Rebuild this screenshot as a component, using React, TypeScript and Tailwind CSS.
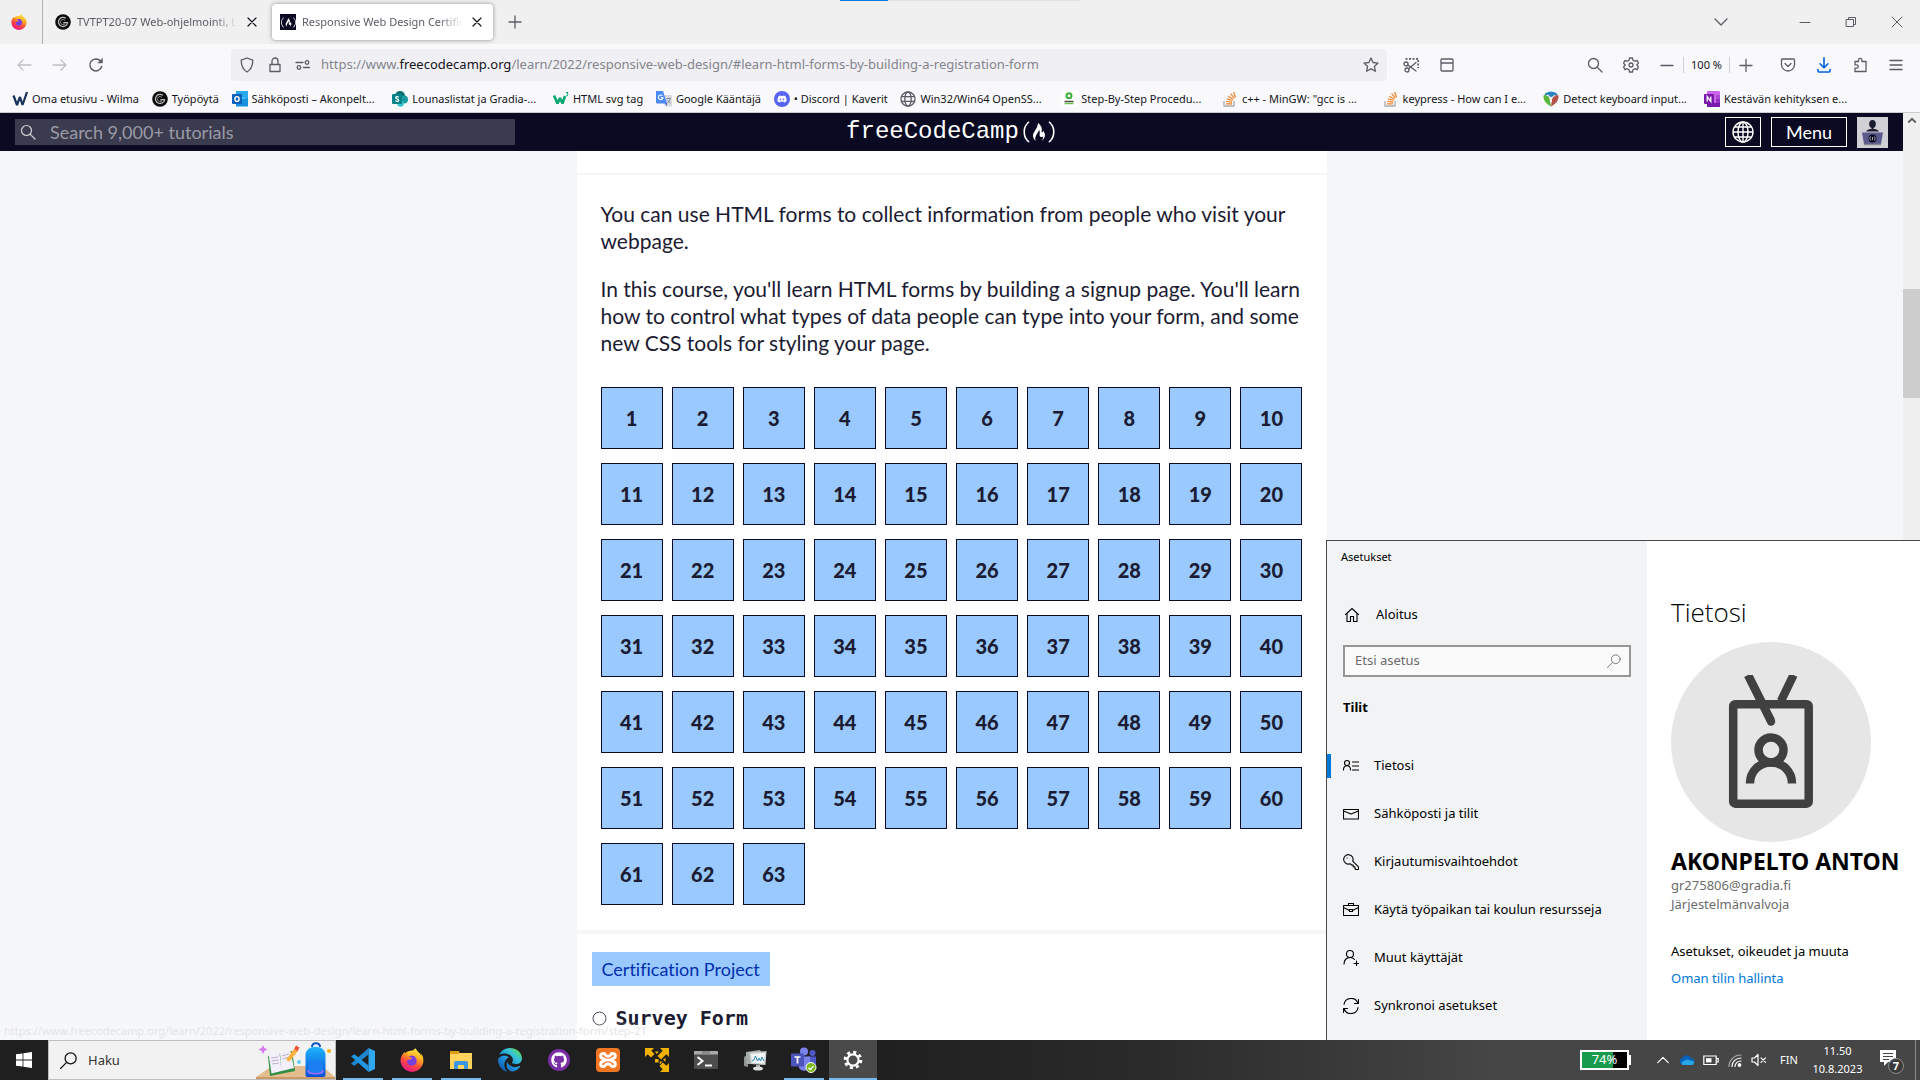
import type { ReactNode } from 'react';
import {
  FaDiscord,
  FaEdge,
  FaFirefoxBrowser,
  FaFreeCodeCamp,
  FaGithub,
} from 'react-icons/fa6';

const UI = "font-['Noto_Sans','Open_Sans',sans-serif]";

/* ---------- shared drawings ---------- */

function Stroke({ size = 16, width = 1.3, children }: { size?: number; width?: number; children: ReactNode }) {
  return (
    <svg
      width={size}
      height={size}
      viewBox="0 0 16 16"
      fill="none"
      stroke="currentColor"
      strokeWidth={width}
      strokeLinecap="round"
      strokeLinejoin="round"
      aria-hidden="true"
      className="shrink-0"
    >
      {children}
    </svg>
  );
}

function Gradients() {
  return (
    <svg width="0" height="0" className="absolute" aria-hidden="true">
      <defs>
        <linearGradient id="fox" x1="0.8" y1="0" x2="0.3" y2="1">
          <stop offset="0" stopColor="#fff44f" />
          <stop offset="0.35" stopColor="#ffb01f" />
          <stop offset="0.65" stopColor="#ff4a3d" />
          <stop offset="1" stopColor="#e6158a" />
        </linearGradient>
        <linearGradient id="edge" x1="0.1" y1="1" x2="0.9" y2="0.1">
          <stop offset="0" stopColor="#0f4fa8" />
          <stop offset="0.45" stopColor="#1f93dc" />
          <stop offset="0.75" stopColor="#36c2d8" />
          <stop offset="1" stopColor="#5fd85a" />
        </linearGradient>
        <linearGradient id="bag" x1="0" y1="0" x2="0" y2="1">
          <stop offset="0" stopColor="#1fb6ff" />
          <stop offset="1" stopColor="#0a4fd6" />
        </linearGradient>
      </defs>
    </svg>
  );
}

function Firefox({ size }: { size: number }) {
  return (
    <span className="relative flex items-center justify-center">
      <svg width={size} height={size} viewBox="0 0 24 24" className="absolute" aria-hidden="true">
        <circle cx="12" cy="13" r="10.5" fill="url(#fox)" />
        <circle cx="12" cy="13" r="5.5" fill="#7a3fe0" />
      </svg>
      <FaFirefoxBrowser size={size} className="relative fill-[url(#fox)]" />
    </span>
  );
}

function Gradia() {
  return (
    <svg width="16" height="16" viewBox="0 0 16 16" className="shrink-0" fill="none" aria-hidden="true">
      <circle cx="8" cy="8" r="7.8" fill="#0a0a0a" />
      <path d="M11 4.400A4.600 4.600 0 1 0 12.600 8.600H8.400" stroke="#bdbdbd" strokeWidth="1.200" />
      <path d="M10 6.400A2.600 2.600 0 1 0 9.600 10.100M9 8.600v3" stroke="#8b8b8b" strokeWidth="1" />
    </svg>
  );
}

function Close({ size = 16 }: { size?: number }) {
  return (
    <Stroke size={size} width={1.2}>
      <path d="M4 4l8 8M12 4l-8 8" />
    </Stroke>
  );
}

/* ---------- tab strip ---------- */

function TabStrip() {
  return (
    <div className="relative flex h-11 shrink-0 items-center bg-[#f0f0f0] text-[11px] text-[#5b5b66]">
      <div className="absolute top-0 left-[840px] flex h-px w-60 bg-[#e0e0e0]">
        <div className="w-12 bg-[#0078d7]" />
      </div>
      <button type="button" aria-label="Firefox View" className="flex h-full w-[43px] items-center justify-center border-r border-[#b0b0b4] pr-1">
        <Firefox size={16} />
      </button>
      <div role="tablist" className="flex h-full items-center gap-2">
        <div className="flex h-9 w-[221px] items-center gap-1.5 pr-1 pl-3">
          <Gradia />
          <button
            type="button"
            role="tab"
            aria-selected="false"
            className="min-w-0 flex-1 overflow-hidden text-left whitespace-nowrap [mask-image:linear-gradient(to_right,black_85%,transparent)]"
          >
            TVTPT20-07 Web-ohjelmointi, L
          </button>
          <button type="button" aria-label="Close tab" className="text-[#15141a]">
            <Close />
          </button>
        </div>
        <div className="flex h-9 w-[221px] items-center gap-1.5 rounded bg-white px-2 shadow-[0_0_4px_rgba(0,0,0,0.4)]">
          <span className="flex size-4 items-center justify-center bg-[#0a0a23] text-white">
            <FaFreeCodeCamp size={15} />
          </span>
          <button
            type="button"
            role="tab"
            aria-selected="true"
            className="min-w-0 flex-1 text-left whitespace-nowrap [mask-image:linear-gradient(to_right,black_85%,transparent)]"
          >
            Responsive Web Design Certific
          </button>
          <button type="button" aria-label="Close tab" className="text-[#15141a]">
            <Close />
          </button>
        </div>
      </div>
      <button type="button" aria-label="New tab" className="ml-3 flex size-5 items-center justify-center">
        <Stroke><path d="M8 2v12M2 8h12" /></Stroke>
      </button>
      <div className="ml-auto flex h-full items-center">
        <button type="button" aria-label="List all tabs" className="mr-[38px] flex h-full w-[46px] items-center justify-center">
          <Stroke><path d="M2 5l6 6 6-6" /></Stroke>
        </button>
        <button type="button" aria-label="Minimize" className="flex h-full w-[46px] items-center justify-center">
          <Stroke width={1}><path d="M3 8.500h10" /></Stroke>
        </button>
        <button type="button" aria-label="Restore" className="flex h-full w-[46px] items-center justify-center">
          <Stroke width={1}><path d="M3.500 5.500h7v7h-7zM5.500 5.500v-2h7v7h-2" /></Stroke>
        </button>
        <button type="button" aria-label="Close window" className="flex h-full w-[46px] items-center justify-center">
          <Stroke width={1}><path d="M3 3l10 10M13 3L3 13" /></Stroke>
        </button>
      </div>
    </div>
  );
}

/* ---------- navigation toolbar ---------- */

function ToolButton({ label, className = 'w-9', children }: { label: string; className?: string; children: ReactNode }) {
  return (
    <button type="button" aria-label={label} className={`flex h-8 shrink-0 items-center justify-center ${className}`}>
      {children}
    </button>
  );
}

function Toolbar() {
  return (
    <div className="flex h-[42px] shrink-0 items-center bg-[#f9f9fb] px-1.5 pb-px text-[#5b5b66]">
      <ToolButton label="Back" className="w-9 text-[#bfbfc6]">
        <Stroke><path d="M15 8H2M7 3L2 8l5 5" /></Stroke>
      </ToolButton>
      <ToolButton label="Forward" className="w-9 text-[#bfbfc6]">
        <Stroke><path d="M1 8h13M9 3l5 5-5 5" /></Stroke>
      </ToolButton>
      <ToolButton label="Reload">
        <Stroke width={1.5}>
          <path d="M13.700 9.500A6 6 0 1 1 12.500 4" />
          <path d="M14.500 1.500v4.500H10z" fill="currentColor" strokeWidth={0.5} />
        </Stroke>
      </ToolButton>
      <div className="w-[117px]" />
      <div className="flex h-8 min-w-0 flex-1 items-center rounded bg-[#f0f0f4] pl-2">
        <div className="flex shrink-0 items-center gap-3">
          <Stroke><path d="M8 1l5.800 2.200c0 5.300-1.800 9.300-5.800 11.800C4 12.500 2.200 8.500 2.200 3.200z" /></Stroke>
          <Stroke><path d="M3 7.500h10v7H3zM5 7.500V4a3 3 0 0 1 6 0v3.500" /></Stroke>
          <Stroke>
            <path d="M1 5.500h7M8.500 10.500h6" />
            <circle cx="12" cy="5.500" r="1.800" />
            <circle cx="4" cy="10.500" r="1.800" />
          </Stroke>
        </div>
        <div role="textbox" aria-label="Address" className="min-w-0 flex-1 truncate pt-px pl-2.5 text-[13px] text-[#84848c]">
          https://www.<span className="text-[#15141a]">freecodecamp.org</span>
          /learn/2022/responsive-web-design/#learn-html-forms-by-building-a-registration-form
        </div>
        <button type="button" aria-label="Bookmark this page" className="flex w-8 items-center justify-center">
          <Stroke><path d="M8 1l2.100 4.500 4.900.6-3.600 3.300 1 4.900L8 11.900l-4.400 2.400 1-4.900L1 6.100l4.900-.6z" /></Stroke>
        </button>
      </div>
      <div className="w-1.5" />
      <ToolButton label="Screenshot">
        <Stroke>
          <circle cx="3" cy="7" r="2" />
          <circle cx="4" cy="13" r="2" />
          <path d="M5 8l8 6M5.500 11.800L13 5.500" />
          <path d="M2.500 1.800h12.700v9.500" strokeDasharray="2 1.500" strokeLinecap="butt" strokeWidth={1.800} />
        </Stroke>
      </ToolButton>
      <ToolButton label="Sidebar">
        <Stroke><path d="M3 2h10a1 1 0 0 1 1 1v10a1 1 0 0 1-1 1H3a1 1 0 0 1-1-1V3a1 1 0 0 1 1-1zM2 6h12" /></Stroke>
      </ToolButton>
      <div className="w-28" />
      <ToolButton label="Search">
        <Stroke><circle cx="6.500" cy="6.500" r="5" /><path d="M10.500 10.500L15 15" /></Stroke>
      </ToolButton>
      <ToolButton label="Settings">
        <Stroke>
          <circle cx="8" cy="8" r="2" />
          <path d="M6.500 1h3l.5 2.300 1.800 1 2.200-.9 1.500 2.700L13.800 8l1.700 1.900-1.500 2.700-2.200-.9-1.800 1L9.500 15h-3L6 12.700l-1.800-1-2.200.9L.5 9.900 2.200 8 .5 6.100 2 3.400l2.200.9 1.800-1z" />
        </Stroke>
      </ToolButton>
      <div className="w-0.5" />
      <ToolButton label="Zoom out" className="w-8"><Stroke><path d="M2 8.500h12" /></Stroke></ToolButton>
      <button type="button" className="h-4 w-[47px] shrink-0 border-x border-[#d0d0d6] text-[11px] leading-4 text-[#15141a]">
        100 %
      </button>
      <ToolButton label="Zoom in" className="w-8"><Stroke><path d="M2 8.500h12M8 2.500v12" /></Stroke></ToolButton>
      <div className="w-2" />
      <ToolButton label="Pocket">
        <Stroke><path d="M2.500 2h11a1 1 0 0 1 1 1v4.500a6.500 6.500 0 0 1-13 0V3a1 1 0 0 1 1-1zM5 6.500l3 3 3-3" /></Stroke>
      </ToolButton>
      <ToolButton label="Downloads" className="w-9 text-[#0061e0]">
        <Stroke width={1.600}><path d="M8 .8v9.700M4 6.800l4 4 4-4M2 12.500v1.500a1 1 0 0 0 1 1h10a1 1 0 0 0 1-1v-1.500" /></Stroke>
      </ToolButton>
      <ToolButton label="Extensions">
        <Stroke><path d="M3 4.500h3.500V3a1.700 1.700 0 0 1 3.400 0v1.500H14v10H3v-3.300h1.600a1.700 1.700 0 0 0 0-3.400H3z" /></Stroke>
      </ToolButton>
      <ToolButton label="Open menu"><Stroke><path d="M2 3.500h12M2 8h12M2 12.500h12" /></Stroke></ToolButton>
    </div>
  );
}

/* ---------- bookmarks ---------- */

function Tile({ children }: { children: ReactNode }) {
  return (
    <svg width="16" height="16" viewBox="0 0 16 16" fill="none" className="shrink-0" aria-hidden="true">
      {children}
    </svg>
  );
}

const stack = (
  <Tile>
    <path d="M2 10v5h10v-5" stroke="#a9adb0" strokeWidth="1.300" />
    <path d="M4 12.800h6M4.100 10.500l6 .6M4.800 7.900l5.700 1.600M6.300 5.200l5 3.100M8.600 2.700l3.800 4.500M11.600 1l2 5.300" stroke="#f48024" strokeWidth="1.200" />
  </Tile>
);

const bookmarks: { label: string; icon: ReactNode }[] = [
  {
    label: 'Oma etusivu - Wilma',
    icon: (
      <Tile>
        <path d="M1.500 4.500L5 14l3-8 2.500 8L15 1" stroke="#17325c" strokeWidth="2.200" strokeLinejoin="bevel" />
      </Tile>
    ),
  },
  { label: 'Työpöytä', icon: <Gradia /> },
  {
    label: 'Sähköposti – Akonpelt...',
    icon: (
      <Tile>
        <path d="M4 0h12v7l-6 3-6-3z" fill="#28a8ea" />
        <path d="M4 6l12 1v8H4z" fill="#50d9ff" />
        <path d="M4 9l12-2v8.500H4z" fill="#1490df" />
        <rect x="0" y="3" width="10" height="10" rx="1" fill="#0a5fb8" />
        <ellipse cx="5" cy="8" rx="2.100" ry="2.400" stroke="#fff" strokeWidth="1.400" />
      </Tile>
    ),
  },
  {
    label: 'Lounaslistat ja Gradia-...',
    icon: (
      <Tile>
        <circle cx="8" cy="5" r="5" fill="#036c70" />
        <circle cx="12" cy="8.500" r="4" fill="#1a9ba1" />
        <circle cx="8.500" cy="12.500" r="3.300" fill="#37c6d0" />
        <rect x="0" y="3" width="10" height="10" rx="1" fill="#038387" />
        <path d="M6.700 6.200C5.500 5.300 3.600 5.600 3.700 6.800c.1 1.300 3 .9 3 2.400 0 1.300-2 1.500-3.200.6" stroke="#fff" strokeWidth="1.200" />
      </Tile>
    ),
  },
  {
    label: 'HTML svg tag',
    icon: (
      <Tile>
        <path d="M1 4.500l3.500 8L7 7l2.500 5.500L12 5" stroke="#04aa6d" strokeWidth="2.600" strokeLinejoin="bevel" />
        <path d="M13 1.500h2l-1 1.500c1.300 0 1.300 2-1 1.700" stroke="#04aa6d" strokeWidth="1" />
      </Tile>
    ),
  },
  {
    label: 'Google Kääntäjä',
    icon: (
      <Tile>
        <path d="M6 4h10v11.500H9z" fill="#d9dbe0" />
        <path d="M9 12l1.500 3.500L11 12z" fill="#2f56c9" />
        <path d="M0 0h7l4 12.500H1a1 1 0 0 1-1-1z" fill="#4a8af4" />
        <path d="M6.500 4.800A2.300 2.300 0 1 0 7 6.600H4.900" stroke="#fff" strokeWidth="1.100" />
        <path d="M10.500 7.500h4.500M12.700 6.500v1M14 8c-.4 1.800-1.500 3-2.800 4M11.500 9c.6 1.300 1.600 2.300 3 3" stroke="#7b8794" strokeWidth=".9" />
      </Tile>
    ),
  },
  {
    label: '• Discord | Kaverit',
    icon: (
      <span className="flex size-4 shrink-0 items-center justify-center rounded-full bg-[#5865f2] text-white">
        <FaDiscord size={10} />
      </span>
    ),
  },
  {
    label: 'Win32/Win64 OpenSS...',
    icon: (
      <span className="text-[#5b5b66]">
        <Stroke>
          <circle cx="8" cy="8" r="7" />
          <ellipse cx="8" cy="8" rx="3.200" ry="7" />
          <path d="M1.500 5.700h13M1.500 10.300h13" />
        </Stroke>
      </span>
    ),
  },
  {
    label: 'Step-By-Step Procedu...',
    icon: (
      <Tile>
        <rect width="16" height="16" fill="#fff" />
        <circle cx="8" cy="4.800" r="2.500" stroke="#3fae3a" strokeWidth="2" />
        <path d="M3.500 10.500h9" stroke="#444" strokeWidth="1.400" />
        <path d="M3.500 12.500h9" stroke="#6cc04a" strokeWidth="1.500" />
      </Tile>
    ),
  },
  { label: 'c++ - MinGW: "gcc is ...', icon: stack },
  { label: 'keypress - How can I e...', icon: stack },
  {
    label: 'Detect keyboard input...',
    icon: (
      <Tile>
        <path d="M1.500 3C5-.5 11-.5 14.500 3L13 6H3z" fill="#2e86c1" />
        <path d="M.5 4.500C2 3 5 4.500 6.500 7l1.500 8.500C3 13 0 9 .5 4.500z" fill="#5bb63a" />
        <path d="M15.500 4.500C14 3 10 4.500 9 8l-1 7.500c5-2.500 8-6.500 7.500-11z" fill="#b5524a" />
        <path d="M3.500 4.500C6 4 8 7 8 11c0-3 1.500-6 4.500-6.500" stroke="#f4f4f4" strokeWidth="1.200" />
      </Tile>
    ),
  },
  {
    label: 'Kestävän kehityksen e...',
    icon: (
      <Tile>
        <rect x="3" y="0" width="13" height="16" rx="1" fill="#ca64ea" />
        <path d="M12 4h4v4h-4z" fill="#ae4bd5" />
        <path d="M12 8h4v4h-4z" fill="#9332bf" />
        <path d="M3 12h13v4H3z" fill="#7719aa" />
        <rect x="0" y="3" width="10" height="10" rx="1" fill="#7719aa" />
        <path d="M3.200 10.500v-5l3.600 5v-5" stroke="#fff" strokeWidth="1.300" />
      </Tile>
    ),
  },
];

function BookmarksBar() {
  return (
    <nav
      aria-label="Bookmarks"
      className="flex h-[27px] shrink-0 items-center justify-between border-b border-[#ccccd0] bg-[#f9f9fb] pr-[68px] pl-3 text-[11px] text-[#15141a]"
    >
      {bookmarks.map((b) => (
        <a
          key={b.label}
          href="#bookmark"
          className={
            b.label.endsWith('...')
              ? 'flex w-[148px] items-center gap-1 whitespace-nowrap'
              : 'flex items-center gap-1 whitespace-nowrap'
          }
        >
          {b.icon}
          {b.label}
        </a>
      ))}
    </nav>
  );
}

/* ---------- freeCodeCamp page ---------- */

function SiteHeader() {
  return (
    <header className="grid h-[38px] shrink-0 grid-cols-[1fr_auto_1fr] items-center bg-[#0a0a23] pr-[15px] pl-[15px] font-['Lato',sans-serif] text-white">
      <label className="flex h-[26px] w-full max-w-[500px] items-center bg-[#3b3b4f] text-[#d0d0d5]">
        <span className="flex w-[35px] pl-[5px]">
          <Stroke width={1.2}><circle cx="6.500" cy="6.500" r="5" /><path d="M10.300 10.300L15 15" /></Stroke>
        </span>
        <input
          type="search"
          aria-label="Search"
          placeholder="Search 9,000+ tutorials"
          className="min-w-0 flex-1 bg-transparent text-lg leading-6 outline-none placeholder:text-[#9a9aa5]"
        />
      </label>
      <a href="#home" className="flex items-center font-['Liberation_Mono',monospace] text-2xl leading-7" aria-label="freeCodeCamp">
        freeCodeCamp
        <FaFreeCodeCamp className="ml-0.5 h-7 w-9" />
      </a>
      <div className="flex items-center justify-end gap-2.5">
        <button type="button" aria-label="Language" className="flex h-[30px] w-9 items-center justify-center border border-white">
          <svg width="22" height="22" viewBox="0 0 22 22" fill="none" stroke="#fff" strokeWidth="1.400" aria-hidden="true">
            <circle cx="11" cy="11" r="10" />
            <ellipse cx="11" cy="11" rx="5" ry="10" />
            <path d="M11 1v20M1 11h20M2.500 6h17M2.500 16h17" />
          </svg>
        </button>
        <button type="button" className="h-[30px] w-[76px] border border-white text-lg leading-7">
          Menu
        </button>
        <button type="button" aria-label="Profile" className="bg-[#d0d0d5]">
          <svg width="31" height="31" viewBox="0 0 31 31" aria-hidden="true">
            <ellipse cx="15.500" cy="7" rx="3.300" ry="4" fill="#1b1b32" />
            <path d="M14.500 10h2v3h-2zM9 14.500c1-2 3.500-2.500 6.500-2.500s5.500.5 6.500 2.500z" fill="#1b1b32" />
            <path d="M5 15.500h21l-2 11.500H7z" fill="#5a5a8c" />
            <path d="M7 27.500h17" stroke="#858591" strokeWidth="1.500" />
            <circle cx="15.500" cy="21.500" r="4" fill="#0a0a23" />
            <path d="M13.500 19.500q-1.300 2 0 4M17.500 19.500q1.300 2 0 4M15.500 20v3" stroke="#d0d0d5" strokeWidth=".8" fill="none" />
          </svg>
        </button>
      </div>
    </header>
  );
}

const steps = Array.from({ length: 63 }, (_, i) => i + 1);

function Course() {
  return (
    <main className="mx-auto w-full max-w-[750px] font-['Lato',sans-serif] text-[#1b1b32]">
      <div className="h-6 border-b-2 border-[#f5f6f7] bg-white" />
      <section className="bg-white pt-[25px] pb-[25px]">
        <div className="space-y-[21px] pr-4 pl-6 text-[21px] leading-[27px] [font-variant-ligatures:none]">
          <p>You can use HTML forms to collect information from people who visit your webpage.</p>
          <p>
            In this course, you'll learn HTML forms by building a signup page. You'll learn how to control what types of
            data people can type into your form, and some new CSS tools for styling your page.
          </p>
        </div>
        <div className="mt-[31px] grid grid-cols-10 gap-x-[9px] gap-y-3.5 px-6">
          {steps.map((n) => (
            <a
              key={n}
              href="#step"
              className="flex h-[62px] items-center justify-center border border-[#0a0a23] bg-[#99c9ff] text-xl font-black"
            >
              {n}
            </a>
          ))}
        </div>
      </section>
      <section className="mt-1 bg-white px-[15px] pt-[18px] pb-20">
        <a href="#project" className="inline-block bg-[#99c9ff] px-2.5 text-lg leading-[34px] text-[#002ead] [font-variant-ligatures:none]">
          Certification Project
        </a>
        <h3 className="mt-[18px] flex items-center gap-[9px] font-['DejaVu_Sans_Mono',monospace] text-xl leading-7 font-bold">
          <svg width="15" height="15" viewBox="0 0 15 15" aria-label="Not passed" role="img">
            <circle cx="7.500" cy="7.500" r="6.500" fill="none" stroke="#4a4a5c" />
          </svg>
          Survey Form
        </h3>
      </section>
    </main>
  );
}

function PageScrollbar() {
  return (
    <div className="flex w-[17px] shrink-0 flex-col items-center bg-[#f0f0f0] pt-0.5 text-[#606060]">
      <Stroke size={12} width={2.4}><path d="M3 10l5-5 5 5" strokeLinecap="butt" strokeLinejoin="miter" /></Stroke>
      <div className="mt-[162px] h-[109px] w-full bg-[#cdcdcd]" />
    </div>
  );
}

/* ---------- Windows settings window ---------- */

const settingsItems: { label: string; icon: ReactNode; active?: boolean }[] = [
  {
    label: 'Tietosi',
    active: true,
    icon: (
      <>
        <circle cx="4" cy="5" r="2.500" />
        <path d="M.5 12c0-2.500 1.300-4.200 3.500-4.200S7.500 9.500 7.500 12M9.500 4H16M9.500 8H16M9.500 12H16" />
      </>
    ),
  },
  { label: 'Sähköposti ja tilit', icon: <path d="M.5 3.500h15v9.500H.5zM.5 5L8 8l7.500-3" /> },
  {
    label: 'Kirjautumisvaihtoehdot',
    icon: (
      <>
        <path d="M9.700 7.200A4.700 4.700 0 1 0 7.200 9.700L8.500 11h1.700v1.700h1.700v1.800l1 1h2.600v-2.600z" />
        <path d="M4 4h.1" />
      </>
    ),
  },
  {
    label: 'Käytä työpaikan tai koulun resursseja',
    icon: <path d="M.5 3.500h15v10H.5zM5.500 3.500v-2h5v2M.5 5.500l6 3M15.500 5.500l-6 3M6.500 7.500h3v2h-3z" />,
  },
  {
    label: 'Muut käyttäjät',
    icon: (
      <>
        <circle cx="7" cy="4" r="3.500" />
        <path d="M1 14c0-4 2.500-6.500 6-6.500 2 0 3.500.8 4.500 2M13.500 11v5M11 13.500h5" />
      </>
    ),
  },
  { label: 'Synkronoi asetukset', icon: <path d="M1 6.500A7.200 7.200 0 0 1 15 5.500M15.500 1.500v4h-4M15 9.500A7.200 7.200 0 0 1 1 10.500M.5 14.500v-4h4" /> },
];

function SettingsWindow() {
  return (
    <section
      aria-label="Asetukset"
      className="absolute right-0 bottom-0 flex h-[500px] w-[594px] border-t border-l border-[#4a4a4d] text-[13px] text-black"
    >
      <div className="w-80 shrink-0 bg-[#f2f3f5]">
        <h2 className="pt-2 pl-3.5 text-[11px] leading-4">Asetukset</h2>
        <a href="#home" className="mt-[34px] flex h-8 items-center gap-4 pl-[17px]">
          <Stroke width={1.1}><path d="M1.500 7.500L8 1.500l6.500 6M3 6.500v8h3.500v-5h3v5H13v-8" strokeLinejoin="miter" /></Stroke>
          Aloitus
        </a>
        <label className="mx-4 mt-3.5 flex h-8 items-center border-2 border-[#969696] bg-[#fafafa] pr-2 pl-2.5 text-[#6b6b6b]">
          <input
            type="search"
            aria-label="Etsi asetus"
            placeholder="Etsi asetus"
            className="min-w-0 flex-1 bg-transparent outline-none placeholder:text-[#6b6b6b]"
          />
          <Stroke size={14} width={1}><circle cx="10" cy="6" r="5" /><path d="M6.300 9.700L.5 15.500" /></Stroke>
        </label>
        <h3 className="mt-5 pl-4 leading-5 font-bold">Tilit</h3>
        <nav className="mt-[25px]">
          {settingsItems.map((item) => (
            <a key={item.label} href="#setting" className="flex h-12 items-center">
              <span className={item.active ? 'h-6 w-1 bg-[#0078d7]' : 'h-6 w-1'} />
              <span className="flex w-[43px] pl-3">
                <Stroke width={1.1}>{item.icon}</Stroke>
              </span>
              {item.label}
            </a>
          ))}
        </nav>
      </div>
      <div className="min-w-0 flex-1 overflow-hidden bg-white pt-14 pl-6 whitespace-nowrap">
        <h1 className="font-['Open_Sans',sans-serif] text-[26px] leading-[30px] font-light">Tietosi</h1>
        <svg width="200" height="200" viewBox="0 0 200 200" className="mt-[15px]" aria-hidden="true">
          <circle cx="100" cy="100" r="100" fill="#e6e6e6" />
          <g fill="none" stroke="#404040" strokeWidth="8.500">
            <rect x="62.200" y="62.200" width="75.500" height="99.500" rx="2" />
            <circle cx="100" cy="108" r="12.500" />
            <path d="M79 141.500c0-12 9-21 21-21s21 9 21 21" />
            <path d="M122.500 33L110 59" />
            <path d="M77 33l23 46" />
          </g>
          <path d="M70 28h60v5H70z" fill="#e6e6e6" />
          <circle cx="100" cy="79.500" r="4.200" fill="#404040" />
        </svg>
        <p className="mt-1 text-[23px] leading-[30px] font-bold">AKONPELTO ANTON</p>
        <p className="leading-[19px] text-[#6b6b6b]">gr275806@gradia.fi</p>
        <p className="leading-[19px] text-[#6b6b6b]">Järjestelmänvalvoja</p>
        <p className="mt-7 leading-[19px]">Asetukset, oikeudet ja muuta</p>
        <a href="#account" className="mt-2 block leading-[19px] text-[#0078d7]">
          Oman tilin hallinta
        </a>
      </div>
    </section>
  );
}

/* ---------- taskbar ---------- */

const apps: { label: string; state: 'idle' | 'open' | 'active'; icon: ReactNode }[] = [
  {
    label: 'Visual Studio Code',
    state: 'open',
    icon: (
      <svg width="24" height="24" viewBox="0 0 24 24" aria-hidden="true">
        <path d="M17.500 0v6.500L3.500 17.800 0 15.800z" fill="#1c87d0" />
        <path d="M17.500 24v-6.500L3.500 6.200 0 8.200z" fill="#2196e3" />
        <path d="M17.500 0L24 3v18l-6.500 3z" fill="#2fa8ef" />
      </svg>
    ),
  },
  { label: 'Firefox', state: 'open', icon: <Firefox size={24} /> },
  {
    label: 'File Explorer',
    state: 'open',
    icon: (
      <svg width="24" height="24" viewBox="0 0 24 24" aria-hidden="true">
        <path d="M1 3h8l2 2H1z" fill="#e0a01b" />
        <path d="M1 5h22v16H1z" fill="#ffd35c" />
        <path d="M1 3h9v3H1z" fill="#dd9c15" />
        <path d="M5 21v-6a2 2 0 0 1 2-2h10a2 2 0 0 1 2 2v6h-4v-4H9v4z" fill="#3a96dd" />
      </svg>
    ),
  },
  {
    label: 'Edge',
    state: 'idle',
    icon: <FaEdge size={24} className="fill-[url(#edge)]" />,
  },
  {
    label: 'GitHub Desktop',
    state: 'idle',
    icon: (
      <span className="flex size-[22px] items-center justify-center rounded-full bg-[#7b2fa6] text-white">
        <FaGithub size={16} />
      </span>
    ),
  },
  {
    label: 'XAMPP',
    state: 'idle',
    icon: (
      <span className="flex size-6 items-center justify-center rounded-sm bg-[#f37623] text-white">
        <svg width="20" height="20" viewBox="0 0 20 20" fill="none" stroke="#fff" strokeWidth="3" aria-hidden="true">
          <path d="M7.500 5a2.500 2.500 0 1 0-2.500 3.500C7 9 7 11 5 11.500A2.500 2.500 0 1 0 7.500 15c.5-1.500 4.500-1.500 5 0a2.500 2.500 0 1 0 2.500-3.500C13 11 13 9 15 8.500A2.500 2.500 0 1 0 12.500 5c-.5 1.500-4.500 1.500-5 0zM7 10h6" />
        </svg>
      </span>
    ),
  },
  {
    label: 'Network tool',
    state: 'idle',
    icon: (
      <svg width="24" height="24" viewBox="0 0 24 24" fill="#f2b200" aria-hidden="true">
        <path d="M0 0h9L6.300 2.700 9.500 6 6 9.500 2.700 6.300 0 9z" />
        <path d="M24 0v9l-2.700-2.700L16 11.500 12.500 8l5.200-5.300L15 0z" />
        <path d="M24 24h-9l2.700-2.700-3.200-3.300 3.500-3.500 3.300 3.200L24 15z" />
        <path d="M10 3.500h4L11.500 6zM20.500 10v4L18 11.500zM10 11h3.500v3.500H10zM14.500 13.500h3l-2.500 3z" />
      </svg>
    ),
  },
  {
    label: 'Terminal',
    state: 'idle',
    icon: (
      <svg width="24" height="24" viewBox="0 0 24 24" aria-hidden="true">
        <rect y="3" width="24" height="18" rx="1" fill="#4d4d4d" />
        <path d="M1 3h22a1 1 0 0 1 1 1v2.500H0V4a1 1 0 0 1 1-1z" fill="#a8a8a8" />
        <path d="M8 3h8v3.500H8z" fill="#8a8a8a" />
        <path d="M3.500 9l5 4-5 4M11 17.500h7" stroke="#fff" strokeWidth="2" fill="none" />
      </svg>
    ),
  },
  {
    label: 'Performance monitor',
    state: 'idle',
    icon: (
      <svg width="24" height="24" viewBox="0 0 24 24" aria-hidden="true">
        <path d="M1 9l4-3v13l-4-1z" fill="#8c9490" />
        <path d="M3 4l14-2 2 3v11H3z" fill="#a3aba7" />
        <path d="M6 4.500L23.500 3l-1 14L8 16z" fill="#c9cfcc" />
        <path d="M8 6l14-1-.8 10.500L9 14.800z" fill="#f2f6f8" />
        <path d="M9 13l2-1 1.500-4 2 5 1.500-3 1.500 3 1.500-4 2 4" stroke="#2b87b8" strokeWidth="1" fill="none" />
        <path d="M13 17h4v3h-4z" fill="#aab0ae" />
        <ellipse cx="15" cy="20.500" rx="5" ry="2" fill="#d8dcda" />
      </svg>
    ),
  },
  {
    label: 'Teams',
    state: 'open',
    icon: (
      <svg width="26" height="26" viewBox="0 0 26 26" aria-hidden="true">
        <circle cx="13" cy="4.500" r="4" fill="#7b83eb" />
        <circle cx="21.500" cy="6" r="3" fill="#5059c9" />
        <path d="M16 9.500h9v7a4.500 4.500 0 0 1-8 2z" fill="#5059c9" />
        <path d="M8 9.500h11v8.500a6 6 0 0 1-11 3z" fill="#7b83eb" />
        <rect y="6.500" width="13" height="13" rx="1" fill="#4b53bc" />
        <path d="M3.500 10h6M6.500 10v6.500" stroke="#fff" strokeWidth="1.700" />
        <circle cx="20" cy="20.500" r="5" fill="#7ab91c" stroke="#fff" />
        <path d="M17.500 20.700l1.800 1.800 3.200-3.500" stroke="#fff" strokeWidth="1.300" fill="none" />
      </svg>
    ),
  },
  {
    label: 'Asetukset',
    state: 'active',
    icon: (
      <svg width="20" height="20" viewBox="0 0 20 20" fill="none" stroke="#fff" aria-hidden="true">
        <circle cx="10" cy="10" r="5.600" strokeWidth="2.200" />
        <circle cx="10" cy="10" r="7.800" strokeWidth="3" strokeDasharray="3.060 3.060" />
      </svg>
    ),
  },
];

const underline = {
  idle: 'h-0.5 w-10',
  open: 'h-0.5 w-10 bg-[#76b9ed]',
  active: 'h-0.5 w-12 bg-[#76b9ed]',
};

function SearchArt() {
  return (
    <svg width="79" height="38" viewBox="0 0 79 38" className="shrink-0" aria-hidden="true">
      <path d="M0 36l16-11h50l13 11v2H0z" fill="#e3bd8f" />
      <path d="M0 36h79v2H0z" fill="#c99a68" />
      <path d="M7 4l1.500 3 3 1.500-3 1.500L7 13l-1.500-3-3-1.500 3-1.500z" fill="#d77cf0" />
      <path d="M12 15l24-5 3 20-25 5z" fill="#2f8f45" />
      <path d="M12.500 13l11-1 2 18-10 2.500zM24 12l10-4 4 19-12.500 3z" fill="#f3effb" />
      <path d="M15 17l7-1M15.500 20l7-1M16 23l7-1M26 15l7-2M26.500 18l7-2" stroke="#b9b1cc" fill="none" />
      <path d="M30 19l8-11 3.500 2.500-8 10z" fill="#ffb13c" />
      <path d="M38 8l2-3.500 3.500 2-2 4z" fill="#f0563a" />
      <circle cx="43" cy="21" r="2" fill="#62cdf0" />
      <circle cx="73" cy="10" r="2" fill="#ffb400" />
      <path d="M56 6c0-5 8-5 8 0" stroke="#0f57c8" strokeWidth="2" fill="none" />
      <path d="M49.500 14c0-11 20-11 20 0v20a2 2 0 0 1-2 2h-16a2 2 0 0 1-2-2z" fill="url(#bag)" />
      <path d="M52 26c0-7 15-7 15 0v5a2 2 0 0 1-2 2H54a2 2 0 0 1-2-2z" fill="#1d7df2" />
      <path d="M52 29c0 5 15 5 15 0" stroke="#a56bff" strokeWidth="1.500" fill="none" />
    </svg>
  );
}

function Taskbar() {
  return (
    <footer className="flex h-10 shrink-0 bg-linear-to-r from-[#1f1f1f] from-45% via-[#2b2b2b] via-60% to-[#464646] to-78% text-white">
      <button type="button" aria-label="Start" className="flex w-12 items-center justify-center">
        <svg width="16" height="16" viewBox="0 0 16 16" fill="#fff" aria-hidden="true">
          <path d="M0 2.300L6.600 1.400v6.200H0zM7.400 1.300L16 0v7.600H7.400zM0 8.400h6.600v6.200L0 13.700zM7.400 8.400H16V16l-8.600-1.300z" />
        </svg>
      </button>
      <label className="flex w-72 items-center border border-[#bdbdbd] bg-[#f2f2f2] text-[#2b2b2b]">
        <span className="flex w-[39px] shrink-0 justify-center text-[#111]">
          <Stroke size={17} width={1.200}><circle cx="10" cy="6" r="5.200" /><path d="M6 10L.5 15.500" /></Stroke>
        </span>
        <input
          type="search"
          aria-label="Haku"
          placeholder="Haku"
          className="min-w-0 flex-1 bg-transparent pt-0.5 text-[13px] outline-none placeholder:text-[#333]"
        />
        <SearchArt />
      </label>
      <div className="ml-[3px] flex gap-px">
        {apps.map((app) => (
          <button
            key={app.label}
            type="button"
            aria-label={app.label}
            className={
              app.state === 'active'
                ? 'flex w-12 flex-col items-center bg-[#4a4a4a]'
                : 'flex w-12 flex-col items-center'
            }
          >
            <span className="flex flex-1 items-center pt-0.5">{app.icon}</span>
            <span className={underline[app.state]} />
          </button>
        ))}
      </div>
      <div className="ml-auto flex items-center">
        <div className="mr-5 flex items-center">
          <div className="flex h-5 w-[49px] items-center justify-center border-2 border-white bg-linear-to-r from-[#1a9a4c] from-70% to-black to-70% text-[13px]">
            74%
          </div>
          <div className="h-2.5 w-0.5 bg-white" />
        </div>
        <button type="button" aria-label="Show hidden icons" className="flex w-6 justify-center">
          <Stroke size={14} width={1.400}><path d="M2 11l6-6 6 6" /></Stroke>
        </button>
        <button type="button" aria-label="OneDrive" className="flex w-6 justify-center">
          <svg width="16" height="16" viewBox="0 0 16 16" aria-hidden="true">
            <path d="M3.500 12.500A3.300 3.300 0 0 1 3.300 6 4.700 4.700 0 0 1 12 6.300a3.200 3.200 0 0 1 3.500 4z" fill="#0a62b8" />
            <path d="M3.300 13A2.500 2.500 0 0 1 3.500 9.500L8 7.500l5 1.500a2 2 0 0 1 0 4z" fill="#28a8ea" />
          </svg>
        </button>
        <button type="button" aria-label="Battery" className="flex w-6 justify-center">
          <Stroke width={1.200}>
            <path d="M.8 4h12.400v8.500H.8zM13.500 6.500h1.700v3.500h-1.700" strokeLinejoin="miter" />
            <path d="M3 6.200h5.500v4.200H3z" fill="currentColor" stroke="none" />
          </Stroke>
        </button>
        <button type="button" aria-label="Network" className="flex w-6 justify-center">
          <Stroke width={1.200}>
            <path d="M2 14.500C2 8 7.500 3 14 3" opacity=".55" />
            <path d="M5 14.500c0-5 4-8.500 9-8.500M8 14.500C8 11.500 10.500 9 14 9" />
            <circle cx="12.500" cy="13" r="1.300" fill="currentColor" />
          </Stroke>
        </button>
        <button type="button" aria-label="Muted" className="flex w-6 justify-center">
          <Stroke width={1.200}>
            <path d="M1 6h2.500L7 2.500v11L3.500 10H1zM10 5.800l4.500 4.500M14.500 5.800L10 10.300" />
          </Stroke>
        </button>
        <span className="w-9 text-center text-[11px]">FIN</span>
        <time className="w-[61px] text-center text-[11px] leading-[18px]">
          11.50
          <br />
          10.8.2023
        </time>
        <button type="button" aria-label="Notifications" className="flex w-[47px] pl-3">
          <svg width="26" height="28" viewBox="0 0 26 28" aria-hidden="true">
            <path d="M0 4h16v12H8l-4 4v-4H0z" fill="#fff" />
            <path d="M3 7.500h10M3 10.500h10M3 13.500h6" stroke="#444" />
            <circle cx="16" cy="20" r="7.500" fill="#3b3b3b" stroke="#8c8c8c" />
            <text x="16" y="24" textAnchor="middle" fontSize="11" fontWeight="bold" fill="#fff">7</text>
          </svg>
        </button>
        <div className="mr-1 h-10 w-px bg-[#8a8a8a]" />
      </div>
    </footer>
  );
}

export default function App() {
  return (
    <div className={`flex h-screen flex-col overflow-hidden bg-[#f5f6f7] ${UI}`}>
      <Gradients />
      <TabStrip />
      <Toolbar />
      <BookmarksBar />
      <div className="relative flex min-h-0 flex-1">
        <div className="flex min-w-0 flex-1 flex-col overflow-hidden bg-[#f5f6f8]">
          <SiteHeader />
          <Course />
        </div>
        <PageScrollbar />
        <div className="absolute bottom-0 left-0 rounded-tr bg-white/10 px-1 text-[11px] leading-[18px] text-[#e4e5e8]">
          https://www.freecodecamp.org/learn/2022/responsive-web-design/learn-html-forms-by-building-a-registration-form/step-21
        </div>
        <SettingsWindow />
      </div>
      <Taskbar />
    </div>
  );
}
